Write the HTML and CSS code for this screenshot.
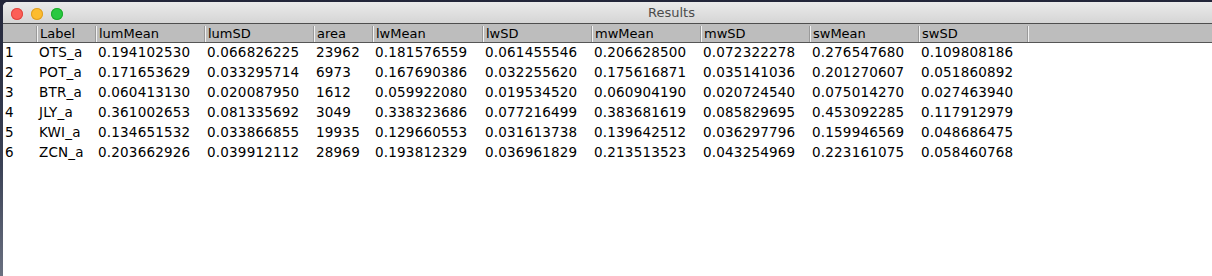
FILE: index.html
```html
<!DOCTYPE html>
<html lang="en">
<head>
    <meta charset="UTF-8">
    <title>Results</title>
    <link rel="stylesheet" href="styles.css">
</head>
<body>
    <div class="window">
        <div class="titlebar">
            <div class="lights">
                <span class="light red"></span>
                <span class="light yellow"></span>
                <span class="light green"></span>
            </div>
            <div class="title">Results</div>
        </div>

        <div class="table">
            <div class="row head">
                <div class="cell"></div>
                <div class="cell">Label</div>
                <div class="cell">lumMean</div>
                <div class="cell">lumSD</div>
                <div class="cell">area</div>
                <div class="cell">lwMean</div>
                <div class="cell">lwSD</div>
                <div class="cell">mwMean</div>
                <div class="cell">mwSD</div>
                <div class="cell">swMean</div>
                <div class="cell">swSD</div>
                <div class="cell"></div>
            </div>
            <div class="row">
                <div class="cell">1</div><div class="cell">OTS_a</div><div class="cell">0.194102530</div><div class="cell">0.066826225</div><div class="cell">23962</div><div class="cell">0.181576559</div><div class="cell">0.061455546</div><div class="cell">0.206628500</div><div class="cell">0.072322278</div><div class="cell">0.276547680</div><div class="cell">0.109808186</div>
            </div>
            <div class="row">
                <div class="cell">2</div><div class="cell">POT_a</div><div class="cell">0.171653629</div><div class="cell">0.033295714</div><div class="cell">6973</div><div class="cell">0.167690386</div><div class="cell">0.032255620</div><div class="cell">0.175616871</div><div class="cell">0.035141036</div><div class="cell">0.201270607</div><div class="cell">0.051860892</div>
            </div>
            <div class="row">
                <div class="cell">3</div><div class="cell">BTR_a</div><div class="cell">0.060413130</div><div class="cell">0.020087950</div><div class="cell">1612</div><div class="cell">0.059922080</div><div class="cell">0.019534520</div><div class="cell">0.060904190</div><div class="cell">0.020724540</div><div class="cell">0.075014270</div><div class="cell">0.027463940</div>
            </div>
            <div class="row">
                <div class="cell">4</div><div class="cell">JLY_a</div><div class="cell">0.361002653</div><div class="cell">0.081335692</div><div class="cell">3049</div><div class="cell">0.338323686</div><div class="cell">0.077216499</div><div class="cell">0.383681619</div><div class="cell">0.085829695</div><div class="cell">0.453092285</div><div class="cell">0.117912979</div>
            </div>
            <div class="row">
                <div class="cell">5</div><div class="cell">KWI_a</div><div class="cell">0.134651532</div><div class="cell">0.033866855</div><div class="cell">19935</div><div class="cell">0.129660553</div><div class="cell">0.031613738</div><div class="cell">0.139642512</div><div class="cell">0.036297796</div><div class="cell">0.159946569</div><div class="cell">0.048686475</div>
            </div>
            <div class="row">
                <div class="cell">6</div><div class="cell">ZCN_a</div><div class="cell">0.203662926</div><div class="cell">0.039912112</div><div class="cell">28969</div><div class="cell">0.193812329</div><div class="cell">0.036961829</div><div class="cell">0.213513523</div><div class="cell">0.043254969</div><div class="cell">0.223161075</div><div class="cell">0.058460768</div>
            </div>
        </div>
    </div>
</body>
</html>
```

FILE: styles.css
```css
/* desktop behind the window */
body {
    margin: 0;
    height: 276px;
    overflow: hidden;
    background: linear-gradient(#23263a, #3b4256 60%, #6a7080);
    font-family: "DejaVu Sans", "Liberation Sans", sans-serif;
}

.window {
    margin: 2px 0 0 3px;
    height: 274px;
    background: #fff;
    border-top-left-radius: 5px;
    overflow: hidden;
}

.titlebar {
    position: relative;
    height: 21px;
    background: linear-gradient(#ebebeb, #d5d5d5);
    border-bottom: 1px solid #4e4e4e;
}

.lights {
    display: flex;
    gap: 8px;
    padding: 6px 0 0 8px;
}

.light {
    width: 12px;
    height: 12px;
    border-radius: 50%;
}

.red { background: #fc5f57; box-shadow: inset 0 0 0 1px #df4641; }
.yellow { background: #fdbc2e; box-shadow: inset 0 0 0 1px #de9f25; }
.green { background: #28c840; box-shadow: inset 0 0 0 1px #1daa2c; }

.title {
    position: absolute;
    top: 3px;
    left: 645px;
    font-size: 13px;
    color: #4c4c4c;
}

.table {
    color: #000;
}

.row {
    display: grid;
    grid-template-columns: 34px 59px 109px 109px 59px 110px 109px 109px 109px 109px 109px 1fr;
    font-size: 13.5px;
    letter-spacing: 0.2px;
    line-height: 16px;
    padding: 1px 0 3px;
    white-space: nowrap;
}

.row .cell {
    padding-left: 2px;
}

.row .cell:first-child {
    padding-left: 2px;
}

.head {
    font-size: 13px;
    letter-spacing: 0;
    background: #bdbdbd;
    border-bottom: 1px solid #555;
    padding: 2px 0 0;
}

.head .cell {
    padding-left: 3px;
    border-right: 1px solid #9a9a9a;
    box-shadow: inset 1px 0 0 #f2f2f2;
}

.head .cell:first-child {
    box-shadow: none;
}

.head .cell:last-child {
    border-right: none;
}
```
